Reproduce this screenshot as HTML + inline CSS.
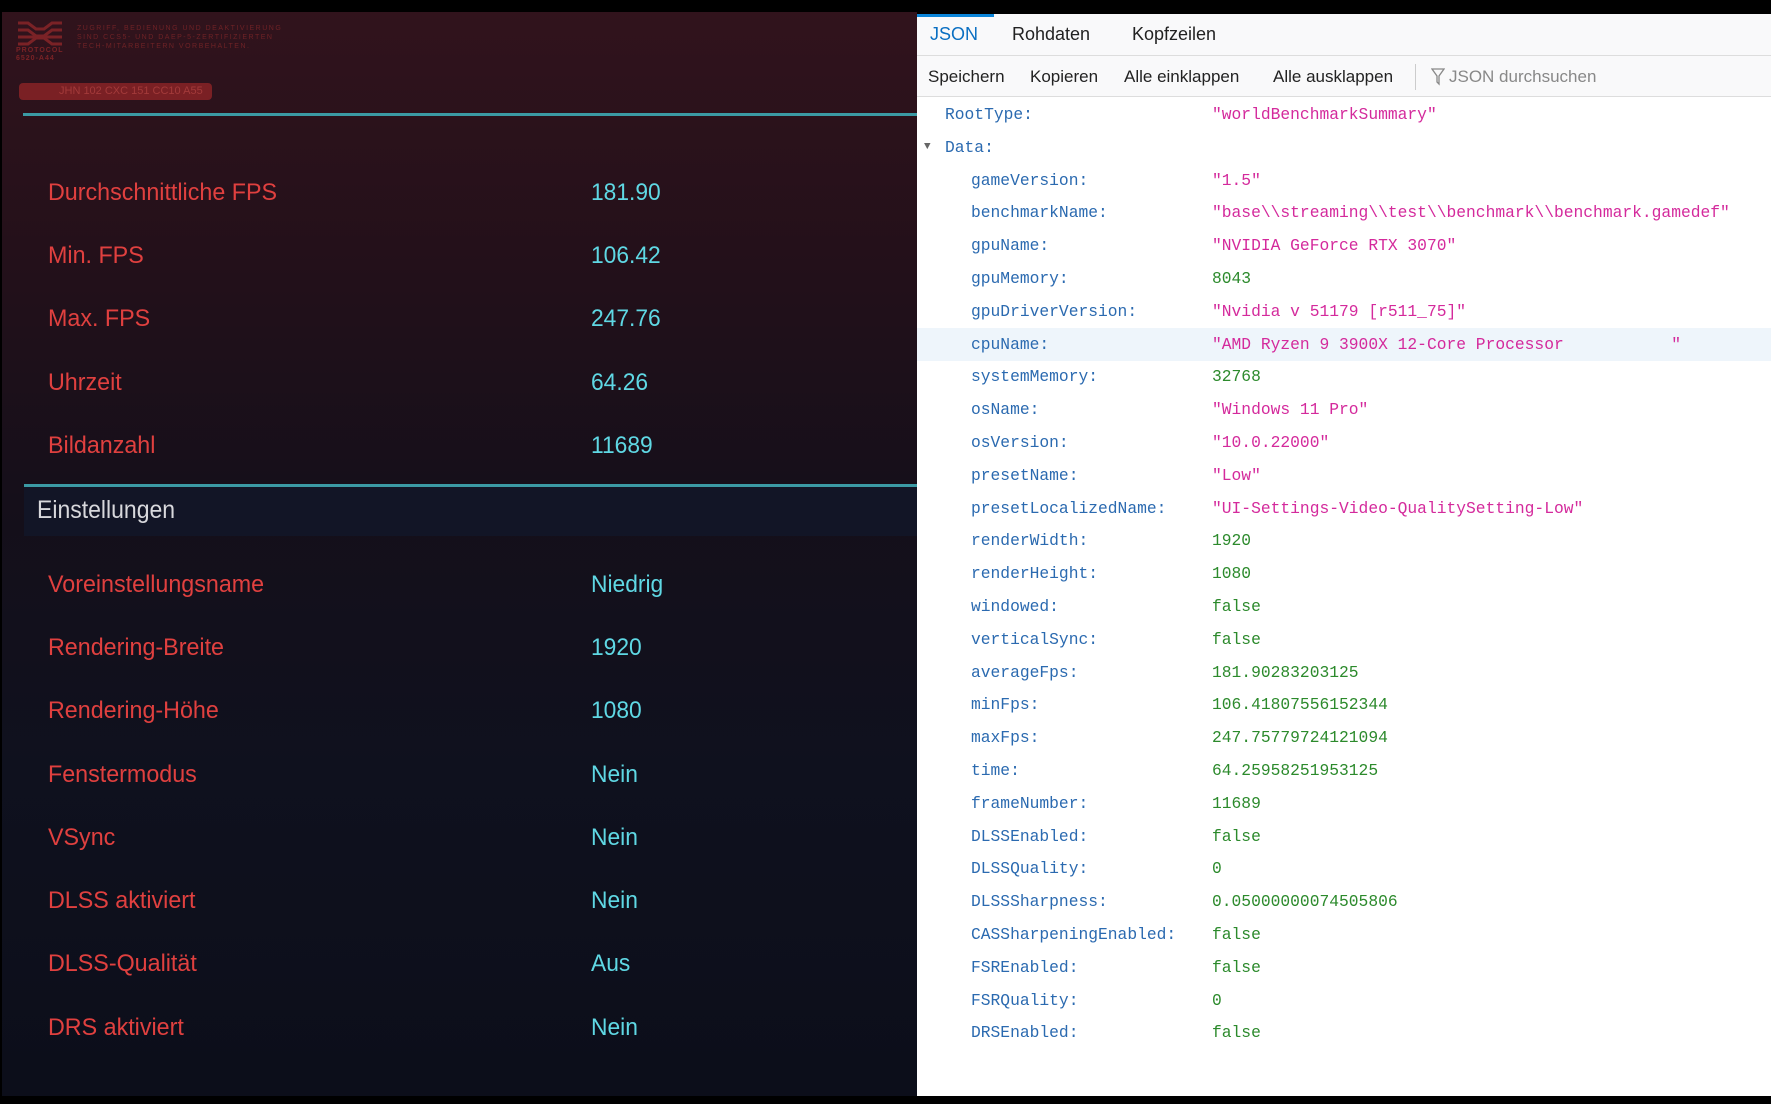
<!DOCTYPE html>
<html><head><meta charset="utf-8"><style>
*{margin:0;padding:0;box-sizing:border-box}
body{width:1771px;height:1104px;background:#000;position:relative;overflow:hidden;font-family:"Liberation Sans",sans-serif}
#left{position:absolute;left:2px;top:12px;width:915px;height:1084px;background:linear-gradient(#31131c 0%,#22101a 25%,#150f1a 45%,#0f111e 70%,#0c0e1a 100%)}
.a{position:absolute}
.lab{position:absolute;left:46px;color:#e0403f;font-size:24px;transform:scaleX(0.97);transform-origin:left center}
.val{position:absolute;left:589px;color:#5fd8e4;font-size:24px;transform:scaleX(0.95);transform-origin:left center}
#right{position:absolute;left:917px;top:14px;width:854px;height:1082px;background:#fff;color:#222}
.tab{position:absolute;top:10px;font-size:18px;color:#222}
.tb{position:absolute;top:53px;font-size:17px;color:#222}
.row{position:absolute;left:0;width:854px;height:33px;font-family:"Liberation Mono","DejaVu Sans Mono",monospace;font-size:16.3px;line-height:33px}
.k{position:absolute;color:#2b6ab0}
.v{position:absolute;left:295px}
.s{color:#d42a9c}.n{color:#2c8a2c}
</style></head><body>
<div id="left">
 <svg class="a" style="left:14px;top:8px" width="48" height="36" viewBox="0 0 48 36"><g stroke="#7a2226" stroke-width="3" fill="none"><path d="M2 3h10l8 6h8l8-6h10M2 10h10l8 6h8l8-6h10M2 17h44M2 24h10l8-6h8l8 6h10"/></g></svg>
 <div class="a" style="left:14px;top:35px;color:#7a2226;font-size:7px;font-weight:bold;letter-spacing:1px;line-height:8px">PROTOCOL<br>6520-A44</div>
 <div class="a" style="left:75px;top:12px;color:#6e2226;font-size:7px;letter-spacing:1.5px;line-height:9px">ZUGRIFF, BEDIENUNG UND DEAKTIVIERUNG<br>SIND CCS5- UND DAEP-5-ZERTIFIZIERTEN<br>TECH-MITARBEITERN VORBEHALTEN.</div>
 <div class="a" style="left:17px;top:71px;width:193px;height:17px;background:#7a2024;border-radius:4px;color:#a33a3a;font-size:11px;line-height:17px;padding-left:40px">JHN 102 CXC 151 CC10 A55</div>
 <div class="a" style="left:21px;top:101px;width:894px;height:3px;background:#3b9aa4"></div>
 <div class="lab" style="top:167px">Durchschnittliche FPS</div><div class="val" style="top:167px">181.90</div>
 <div class="lab" style="top:230px">Min. FPS</div><div class="val" style="top:230px">106.42</div>
 <div class="lab" style="top:293px">Max. FPS</div><div class="val" style="top:293px">247.76</div>
 <div class="lab" style="top:357px">Uhrzeit</div><div class="val" style="top:357px">64.26</div>
 <div class="lab" style="top:420px">Bildanzahl</div><div class="val" style="top:420px">11689</div>
 <div class="a" style="left:22px;top:472px;width:893px;height:3px;background:#3b9aa4"></div>
 <div class="a" style="left:22px;top:475px;width:893px;height:49px;background:#121526"></div>
 <div class="a" style="left:35px;top:484px;color:#d8d8dc;font-size:25px;transform:scaleX(0.92);transform-origin:left center">Einstellungen</div>
 <div class="lab" style="top:559px">Voreinstellungsname</div><div class="val" style="top:559px">Niedrig</div>
 <div class="lab" style="top:622px">Rendering-Breite</div><div class="val" style="top:622px">1920</div>
 <div class="lab" style="top:685px">Rendering-Höhe</div><div class="val" style="top:685px">1080</div>
 <div class="lab" style="top:749px">Fenstermodus</div><div class="val" style="top:749px">Nein</div>
 <div class="lab" style="top:812px">VSync</div><div class="val" style="top:812px">Nein</div>
 <div class="lab" style="top:875px">DLSS aktiviert</div><div class="val" style="top:875px">Nein</div>
 <div class="lab" style="top:938px">DLSS-Qualität</div><div class="val" style="top:938px">Aus</div>
 <div class="lab" style="top:1002px">DRS aktiviert</div><div class="val" style="top:1002px">Nein</div>
</div>
<div id="right">
 <div class="a" style="left:0;top:0;width:854px;height:42px;background:#f9f9fa;border-bottom:1px solid #ddd"></div>
 <div class="a" style="left:0;top:0;width:77px;height:3px;background:#0a84d8"></div>
 <div class="tab" style="left:13px;color:#0a6fc2">JSON</div>
 <div class="tab" style="left:95px">Rohdaten</div>
 <div class="tab" style="left:215px">Kopfzeilen</div>
 <div class="a" style="left:0;top:42px;width:854px;height:41px;background:#f9f9fa;border-bottom:1px solid #ddd"></div>
 <div class="tb" style="left:11px">Speichern</div>
 <div class="tb" style="left:113px">Kopieren</div>
 <div class="tb" style="left:207px">Alle einklappen</div>
 <div class="tb" style="left:356px">Alle ausklappen</div>
 <div class="a" style="left:498px;top:50px;width:1px;height:26px;background:#ccc"></div>
 <svg class="a" style="left:514px;top:54px" width="14" height="18" viewBox="0 0 14 18"><path d="M1 1h12l-5 7v8l-2-2V8z" fill="none" stroke="#888" stroke-width="1.3"/></svg>
 <div class="tb" style="left:532px;color:#888">JSON durchsuchen</div>
 <div class="row" style="top:84px"><span class="k" style="left:28px">RootType:</span><span class="v s">"worldBenchmarkSummary"</span></div>
 <div class="row" style="top:117px"><span class="a" style="left:7px;color:#666;font-size:11px">▼</span><span class="k" style="left:28px">Data:</span></div>
 <div class="row" style="top:150px"><span class="k" style="left:54px">gameVersion:</span><span class="v s">"1.5"</span></div>
 <div class="row" style="top:182px"><span class="k" style="left:54px">benchmarkName:</span><span class="v s">"base\\streaming\\test\\benchmark\\benchmark.gamedef"</span></div>
 <div class="row" style="top:215px"><span class="k" style="left:54px">gpuName:</span><span class="v s">"NVIDIA GeForce RTX 3070"</span></div>
 <div class="row" style="top:248px"><span class="k" style="left:54px">gpuMemory:</span><span class="v n">8043</span></div>
 <div class="row" style="top:281px"><span class="k" style="left:54px">gpuDriverVersion:</span><span class="v s">"Nvidia v 51179 [r511_75]"</span></div>
 <div class="row" style="top:314px;background:#eef5fb"><span class="k" style="left:54px">cpuName:</span><span class="v s" style="white-space:pre">"AMD Ryzen 9 3900X 12-Core Processor           "</span></div>
 <div class="row" style="top:346px"><span class="k" style="left:54px">systemMemory:</span><span class="v n">32768</span></div>
 <div class="row" style="top:379px"><span class="k" style="left:54px">osName:</span><span class="v s">"Windows 11 Pro"</span></div>
 <div class="row" style="top:412px"><span class="k" style="left:54px">osVersion:</span><span class="v s">"10.0.22000"</span></div>
 <div class="row" style="top:445px"><span class="k" style="left:54px">presetName:</span><span class="v s">"Low"</span></div>
 <div class="row" style="top:478px"><span class="k" style="left:54px">presetLocalizedName:</span><span class="v s">"UI-Settings-Video-QualitySetting-Low"</span></div>
 <div class="row" style="top:510px"><span class="k" style="left:54px">renderWidth:</span><span class="v n">1920</span></div>
 <div class="row" style="top:543px"><span class="k" style="left:54px">renderHeight:</span><span class="v n">1080</span></div>
 <div class="row" style="top:576px"><span class="k" style="left:54px">windowed:</span><span class="v n">false</span></div>
 <div class="row" style="top:609px"><span class="k" style="left:54px">verticalSync:</span><span class="v n">false</span></div>
 <div class="row" style="top:642px"><span class="k" style="left:54px">averageFps:</span><span class="v n">181.90283203125</span></div>
 <div class="row" style="top:674px"><span class="k" style="left:54px">minFps:</span><span class="v n">106.41807556152344</span></div>
 <div class="row" style="top:707px"><span class="k" style="left:54px">maxFps:</span><span class="v n">247.75779724121094</span></div>
 <div class="row" style="top:740px"><span class="k" style="left:54px">time:</span><span class="v n">64.25958251953125</span></div>
 <div class="row" style="top:773px"><span class="k" style="left:54px">frameNumber:</span><span class="v n">11689</span></div>
 <div class="row" style="top:806px"><span class="k" style="left:54px">DLSSEnabled:</span><span class="v n">false</span></div>
 <div class="row" style="top:838px"><span class="k" style="left:54px">DLSSQuality:</span><span class="v n">0</span></div>
 <div class="row" style="top:871px"><span class="k" style="left:54px">DLSSSharpness:</span><span class="v n">0.05000000074505806</span></div>
 <div class="row" style="top:904px"><span class="k" style="left:54px">CASSharpeningEnabled:</span><span class="v n">false</span></div>
 <div class="row" style="top:937px"><span class="k" style="left:54px">FSREnabled:</span><span class="v n">false</span></div>
 <div class="row" style="top:970px"><span class="k" style="left:54px">FSRQuality:</span><span class="v n">0</span></div>
 <div class="row" style="top:1002px"><span class="k" style="left:54px">DRSEnabled:</span><span class="v n">false</span></div>
</div>
</body></html>
